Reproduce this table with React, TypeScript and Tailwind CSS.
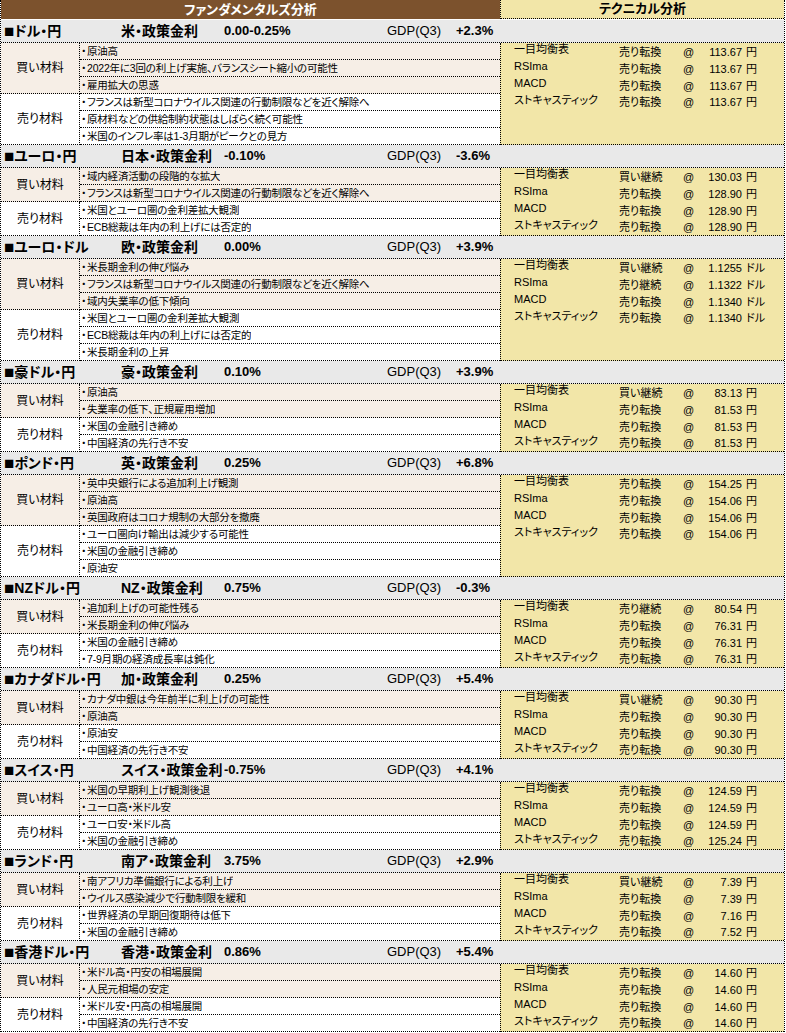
import React from "react";

type Section = {
  pair: string;
  policy: string;
  rate: string;
  gdp: string;
  buy: string[];
  sell: string[];
  unit: string;
  tech: [string, string][];
};

const indicators = ["一目均衡表", "RSIma", "MACD", "ストキャスティック"];

const sections: Section[] = [
  {
    pair: "ドル・円",
    policy: "米・政策金利",
    rate: "0.00-0.25%",
    gdp: "+2.3%",
    buy: ["原油高", "2022年に3回の利上げ実施、バランスシート縮小の可能性", "雇用拡大の思惑"],
    sell: [
      "フランスは新型コロナウイルス関連の行動制限などを近く解除へ",
      "原材料などの供給制約状態はしばらく続く可能性",
      "米国のインフレ率は1-3月期がピークとの見方",
    ],
    unit: "円",
    tech: [
      ["売り転換", "113.67"],
      ["売り転換", "113.67"],
      ["売り転換", "113.67"],
      ["売り転換", "113.67"],
    ],
  },
  {
    pair: "ユーロ・円",
    policy: "日本・政策金利",
    rate: "-0.10%",
    gdp: "-3.6%",
    buy: ["域内経済活動の段階的な拡大", "フランスは新型コロナウイルス関連の行動制限などを近く解除へ"],
    sell: ["米国とユーロ圏の金利差拡大観測", "ECB総裁は年内の利上げには否定的"],
    unit: "円",
    tech: [
      ["買い継続", "130.03"],
      ["売り転換", "128.90"],
      ["売り転換", "128.90"],
      ["売り転換", "128.90"],
    ],
  },
  {
    pair: "ユーロ・ドル",
    policy: "欧・政策金利",
    rate: "0.00%",
    gdp: "+3.9%",
    buy: [
      "米長期金利の伸び悩み",
      "フランスは新型コロナウイルス関連の行動制限などを近く解除へ",
      "域内失業率の低下傾向",
    ],
    sell: ["米国とユーロ圏の金利差拡大観測", "ECB総裁は年内の利上げには否定的", "米長期金利の上昇"],
    unit: "ドル",
    tech: [
      ["買い継続", "1.1255"],
      ["売り継続", "1.1322"],
      ["売り転換", "1.1340"],
      ["売り転換", "1.1340"],
    ],
  },
  {
    pair: "豪ドル・円",
    policy: "豪・政策金利",
    rate: "0.10%",
    gdp: "+3.9%",
    buy: ["原油高", "失業率の低下、正規雇用増加"],
    sell: ["米国の金融引き締め", "中国経済の先行き不安"],
    unit: "円",
    tech: [
      ["買い継続", "83.13"],
      ["売り転換", "81.53"],
      ["売り転換", "81.53"],
      ["売り転換", "81.53"],
    ],
  },
  {
    pair: "ポンド・円",
    policy: "英・政策金利",
    rate: "0.25%",
    gdp: "+6.8%",
    buy: ["英中央銀行による追加利上げ観測", "原油高", "英国政府はコロナ規制の大部分を撤廃"],
    sell: ["ユーロ圏向け輸出は減少する可能性", "米国の金融引き締め", "原油安"],
    unit: "円",
    tech: [
      ["売り転換", "154.25"],
      ["売り転換", "154.06"],
      ["売り転換", "154.06"],
      ["売り転換", "154.06"],
    ],
  },
  {
    pair: "NZドル・円",
    policy: "NZ・政策金利",
    rate: "0.75%",
    gdp: "-0.3%",
    buy: ["追加利上げの可能性残る", "米長期金利の伸び悩み"],
    sell: ["米国の金融引き締め", "7-9月期の経済成長率は鈍化"],
    unit: "円",
    tech: [
      ["売り継続", "80.54"],
      ["売り転換", "76.31"],
      ["売り転換", "76.31"],
      ["売り転換", "76.31"],
    ],
  },
  {
    pair: "カナダドル・円",
    policy: "加・政策金利",
    rate: "0.25%",
    gdp: "+5.4%",
    buy: ["カナダ中銀は今年前半に利上げの可能性", "原油高"],
    sell: ["原油安", "中国経済の先行き不安"],
    unit: "円",
    tech: [
      ["買い継続", "90.30"],
      ["売り転換", "90.30"],
      ["売り転換", "90.30"],
      ["売り転換", "90.30"],
    ],
  },
  {
    pair: "スイス・円",
    policy: "スイス・政策金利",
    rate: "-0.75%",
    gdp: "+4.1%",
    buy: ["米国の早期利上げ観測後退", "ユーロ高・米ドル安"],
    sell: ["ユーロ安・米ドル高", "米国の金融引き締め"],
    unit: "円",
    tech: [
      ["売り転換", "124.59"],
      ["売り転換", "124.59"],
      ["売り転換", "124.59"],
      ["売り転換", "125.24"],
    ],
  },
  {
    pair: "ランド・円",
    policy: "南ア・政策金利",
    rate: "3.75%",
    gdp: "+2.9%",
    buy: ["南アフリカ準備銀行による利上げ", "ウイルス感染減少で行動制限を緩和"],
    sell: ["世界経済の早期回復期待は低下", "米国の金融引き締め"],
    unit: "円",
    tech: [
      ["買い継続", "7.39"],
      ["売り転換", "7.39"],
      ["売り転換", "7.16"],
      ["売り転換", "7.52"],
    ],
  },
  {
    pair: "香港ドル・円",
    policy: "香港・政策金利",
    rate: "0.86%",
    gdp: "+5.4%",
    buy: ["米ドル高・円安の相場展開", "人民元相場の安定"],
    sell: ["米ドル安・円高の相場展開", "中国経済の先行き不安"],
    unit: "円",
    tech: [
      ["売り転換", "14.60"],
      ["売り転換", "14.60"],
      ["売り転換", "14.60"],
      ["売り転換", "14.60"],
    ],
  },
];

function Group({ label, items, bg }: { label: string; items: string[]; bg: string }) {
  return (
    <div className={`flex ${bg}`}>
      <div className="flex w-[79px] shrink-0 items-center justify-center border-r border-b border-dotted border-black text-[12px]">
        {label}
      </div>
      <div className="flex flex-1 flex-col">
        {items.map((t, i) => (
          <div
            key={i}
            className="flex h-[17px] items-center border-b border-dotted border-black pl-[1px] text-[10.5px] leading-[16px] tracking-[-0.2px]"
          >
            <span className="w-[6px] shrink-0">・</span>
            <span className="truncate">{t}</span>
          </div>
        ))}
      </div>
    </div>
  );
}

function Block({ s }: { s: Section }) {
  return (
    <div>
      <div className="flex h-[23px] items-center border-b border-dotted border-black bg-[#e9e9e9] text-[14px] font-bold">
        <span className="flex w-[120px] shrink-0 items-center pl-[3px]">
          <span className="text-[17px] leading-none">■</span>
          {s.pair}
        </span>
        <span className="w-[103px] shrink-0">{s.policy}</span>
        <span className="w-[163px] shrink-0 text-[13px]">{s.rate}</span>
        <span className="w-[69px] shrink-0 text-[13px] font-normal">GDP(Q3)</span>
        <span className="text-[13px]">{s.gdp}</span>
      </div>
      <div className="flex">
        <div className="w-[499px] shrink-0">
          <Group label="買い材料" items={s.buy} bg="bg-[#f6eee6]" />
          <Group label="売り材料" items={s.sell} bg="bg-white" />
        </div>
        <div className="flex flex-1 flex-col border-l border-b border-dotted border-black bg-[#f2e6a8] pl-[13px] text-[11px]">
          {s.tech.map(([sig, price], i) => (
            <div key={i} className="flex h-[17px] last:h-[16px]">
              <span className="w-[105px] shrink-0 self-start leading-[13px]">{indicators[i]}</span>
              <span className="w-[64px] shrink-0 self-end leading-[15px]">{sig}</span>
              <span className="w-[14px] shrink-0 self-end leading-[15px]">@</span>
              <span className="w-[45px] shrink-0 self-end text-right leading-[15px]">{price}</span>
              <span className="ml-[4px] self-end leading-[15px]">{s.unit}</span>
            </div>
          ))}
        </div>
      </div>
    </div>
  );
}

export default function App() {
  return (
    <div className="w-[785px] border-l border-r border-dotted border-black bg-white font-['Liberation_Sans','Noto_Sans_CJK_JP',sans-serif] text-black [font-feature-settings:'palt']">
      <div className="flex h-[20px] border-b border-white text-[13px] font-bold">
        <div className="flex w-[499px] shrink-0 items-center justify-center bg-[#7c522d] text-white">
          ファンダメンタルズ分析
        </div>
        <div className="flex flex-1 items-center justify-center border-l border-b border-dotted border-black bg-[#f2e6a8]">
          テクニカル分析
        </div>
      </div>
      {sections.map((s, i) => (
        <Block key={i} s={s} />
      ))}
    </div>
  );
}
